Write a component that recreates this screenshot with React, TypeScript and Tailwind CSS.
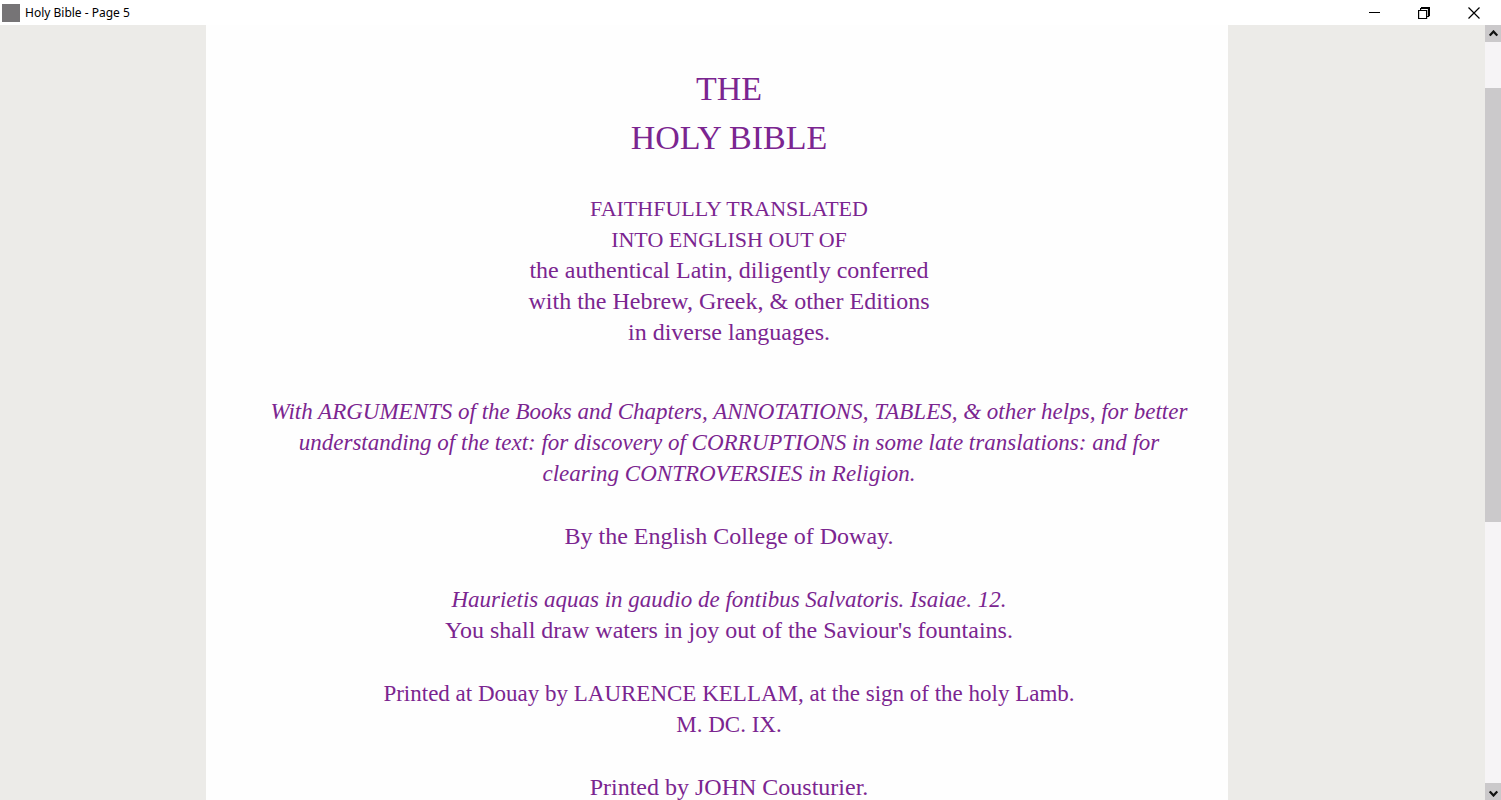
import type { ReactNode } from "react"

function TitleBar() {
  return (
    <header className="flex h-[25px] shrink-0 items-center justify-between bg-white pl-[2px] text-black">
      <div className="flex items-center gap-[5px]">
        <span className="size-[18px] bg-[#767476]" />
        <h1 className="font-['Noto_Sans',sans-serif] text-[12px] leading-4">Holy Bible - Page 5</h1>
      </div>
      <div className="flex h-full pr-[2px]">
        <button type="button" aria-label="Minimize" className="flex w-[50px] items-center justify-center">
          <svg width="11" height="11" viewBox="0 0 11 11" fill="none" stroke="currentColor">
            <path d="M0 5.5h11" />
          </svg>
        </button>
        <button type="button" aria-label="Restore" className="flex w-[50px] items-center justify-center">
          <svg width="12" height="12" viewBox="0 0 12 12" fill="none" stroke="currentColor" strokeWidth="1.2">
            <path d="M.6 3.5h8v8h-8zM2.6 3.5v-2h1v-1h8v8h-1v1h-2M10.5 8.5v-7h-7" />
          </svg>
        </button>
        <button type="button" aria-label="Close" className="flex w-[50px] items-center justify-center">
          <svg width="12" height="12" viewBox="0 0 12 12" fill="none" stroke="currentColor" strokeWidth="1.2">
            <path d="M.5.5l11 11M11.5.5l-11 11" />
          </svg>
        </button>
      </div>
    </header>
  )
}

function ScrollBar() {
  return (
    <div className="flex w-4 shrink-0 flex-col bg-[#f6f4f6]">
      <button type="button" aria-label="Scroll up" className="flex h-[17px] shrink-0 items-center justify-center bg-[#cbc9cb] pl-px">
        <svg width="9" height="7" viewBox="0 0 9 7" fill="none" stroke="#111" strokeWidth="2.2">
          <path d="M.8 5.6L4.5 1.5l3.7 4.1" />
        </svg>
      </button>
      <div className="flex flex-1 flex-col">
        <div className="grow-[46]" />
        <div className="grow-[434] bg-[#cbc9cb]" />
        <div className="grow-[261]" />
      </div>
      <button type="button" aria-label="Scroll down" className="flex h-[17px] shrink-0 items-center justify-center bg-[#cbc9cb] pt-1 pl-px">
        <svg width="9" height="7" viewBox="0 0 9 7" fill="none" stroke="#111" strokeWidth="2.2">
          <path d="M.8 1.4l3.7 4.1 3.7-4.1" />
        </svg>
      </button>
    </div>
  )
}

function Verse({ children }: { children: ReactNode }) {
  return <p className="mt-8 whitespace-nowrap">{children}</p>
}

export default function App() {
  return (
    <div className="flex h-screen flex-col overflow-hidden bg-white">
      <TitleBar />
      <div className="flex min-h-0 flex-1">
        <main className="grid min-w-0 flex-1 grid-cols-[206fr_1022fr_257fr] overflow-hidden bg-[#ecebe8]">
          <article className="col-start-2 min-w-0 bg-[#fefefe] pt-[39px] pr-10 pl-16 text-center font-['Liberation_Serif',serif] text-[24px] leading-[31px] text-[#7b2590]">
            <h2 className="text-[34px] leading-[49px]">
              THE
              <br />
              HOLY BIBLE
            </h2>
            <p className="mt-[31px] whitespace-nowrap text-[22px]">
              FAITHFULLY TRANSLATED
              <br />
              INTO ENGLISH OUT OF
            </p>
            <p className="whitespace-nowrap">
              the authentical Latin, diligently conferred
              <br />
              with the Hebrew, Greek, &amp; other Editions
              <br />
              in diverse languages.
            </p>
            <p className="mt-12 whitespace-nowrap text-[23px] italic">
              With ARGUMENTS of the Books and Chapters, ANNOTATIONS, TABLES, &amp; other helps, for better
              <br />
              understanding of the text: for discovery of CORRUPTIONS in some late translations: and for
              <br />
              clearing CONTROVERSIES in Religion.
            </p>
            <Verse>By the English College of Doway.</Verse>
            <Verse>
              <em className="text-[23px]">Haurietis aquas in gaudio de fontibus Salvatoris. Isaiae. 12.</em>
              <br />
              You shall draw waters in joy out of the Saviour's fountains.
            </Verse>
            <div className="text-[23px]">
              <Verse>
                Printed at Douay by LAURENCE KELLAM, at the sign of the holy Lamb.
                <br />
                M. DC. IX.
              </Verse>
            </div>
            <Verse>Printed by JOHN Cousturier.</Verse>
          </article>
        </main>
        <ScrollBar />
      </div>
    </div>
  )
}
